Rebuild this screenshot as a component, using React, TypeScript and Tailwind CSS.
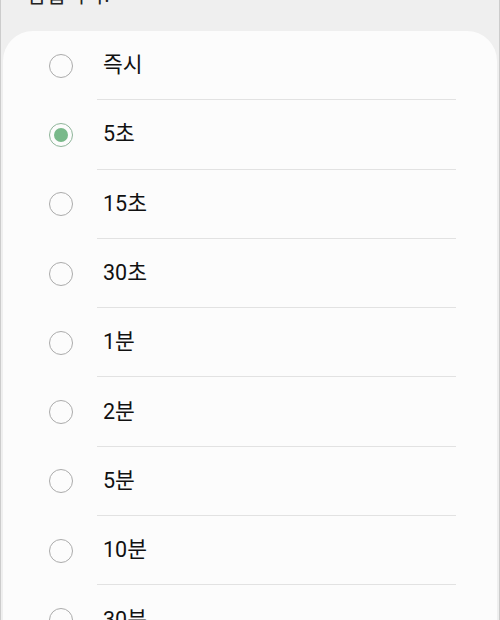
import React from "react";

const items = ["즉시", "5초", "15초", "30초", "1분", "2분", "5분", "10분", "30분"];

export default function App() {
  return (
    <div
      className="w-[500px] h-[620px] overflow-hidden bg-[#efefef] border-x border-[#cccccc]"
      style={{ fontFamily: 'Roboto, "Noto Sans CJK KR", sans-serif' }}
    >
      <div className="h-[31px] overflow-hidden relative">
        <div className="pl-[26px] -mt-[19px] text-[21px] leading-[28px] text-[#222]">잠깁니다.</div>
      </div>
      <div className="mx-[2px] rounded-[30px] bg-[#fcfcfc] h-[700px]">
        {items.map((t, i) => (
          <div key={t} className="h-[69.3px] flex items-stretch pl-[46px]">
            <div className="flex items-center">
              {i === 1 ? (
                <div className="w-6 h-6 rounded-full border-[1.5px] border-[#8fb59a] flex items-center justify-center">
                  <div className="w-[14px] h-[14px] rounded-full bg-[#79b98a]" />
                </div>
              ) : (
                <div className="w-6 h-6 rounded-full border-[1.5px] border-[#ababab]" />
              )}
            </div>
            <div
              className={
                "flex-1 ml-6 mr-[41px] pl-[6px] flex items-center text-[21.5px] text-[#111] " +
                (i < items.length - 1 ? "border-b border-[#e2e2e2]" : "")
              }
            >
              {t}
            </div>
          </div>
        ))}
      </div>
    </div>
  );
}
